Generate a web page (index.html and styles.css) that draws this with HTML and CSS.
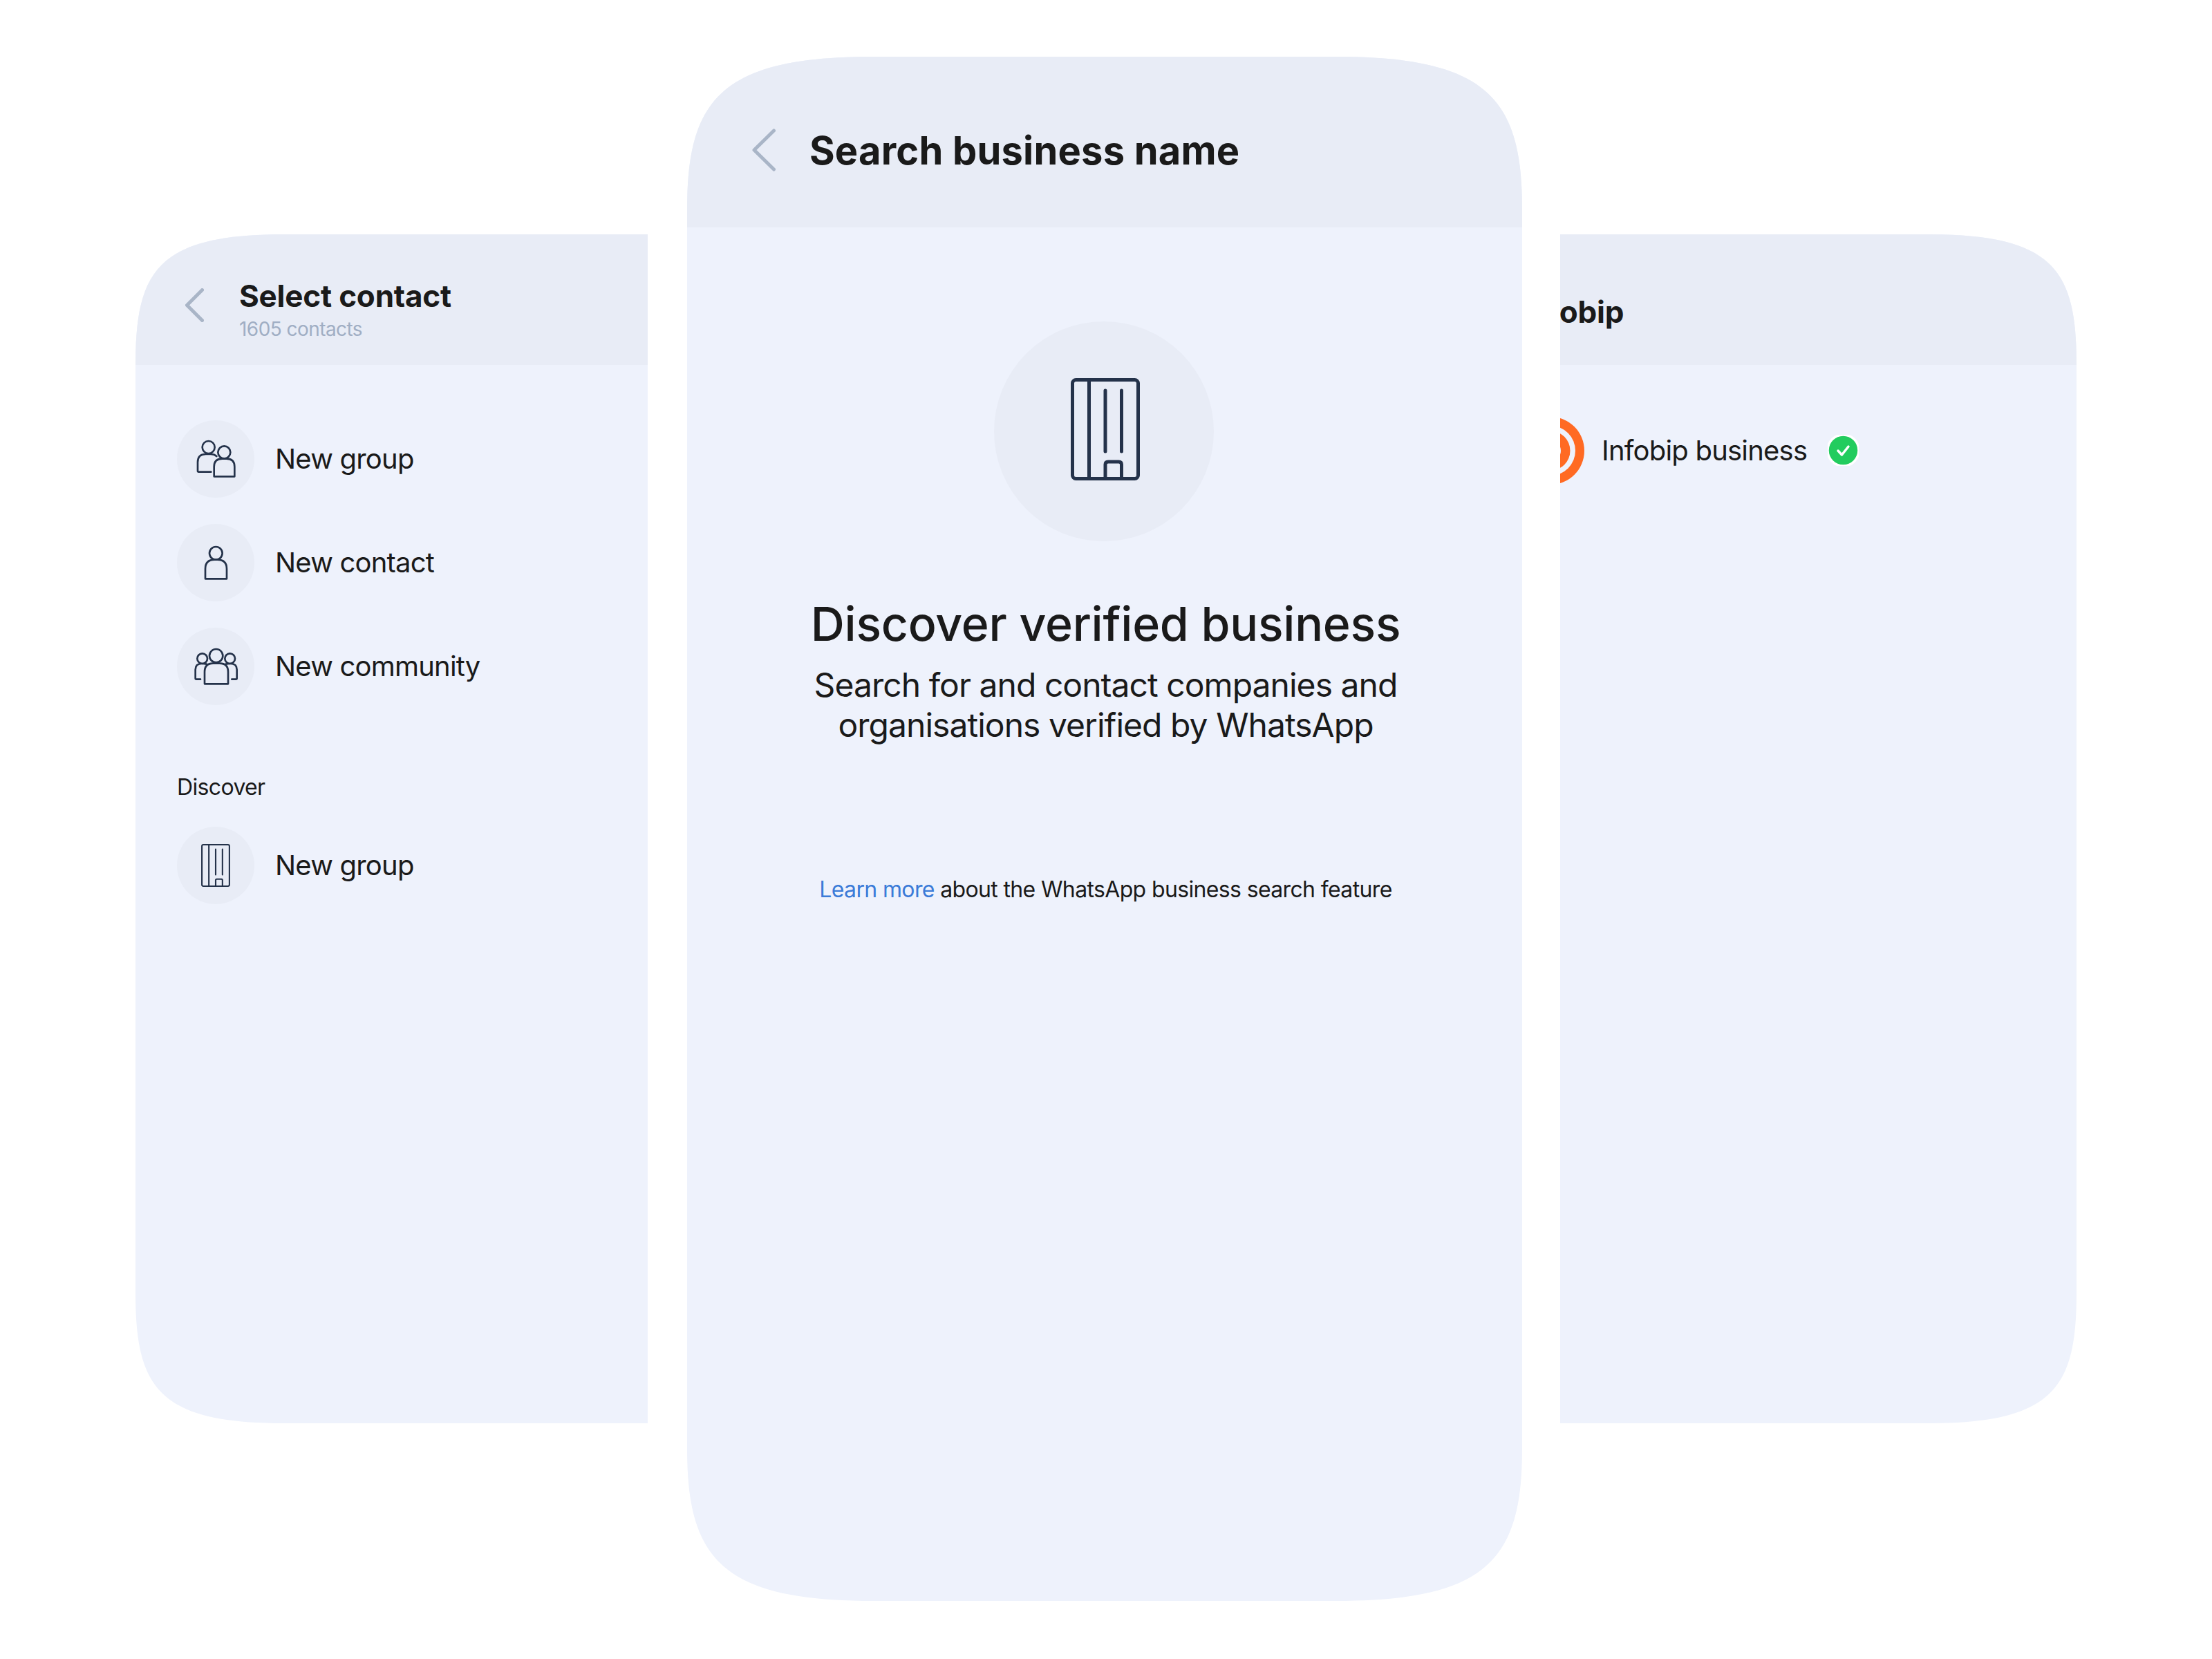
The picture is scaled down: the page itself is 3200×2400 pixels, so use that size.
FILE: index.html
```html
<!DOCTYPE html>
<html lang="en">
<head>
<meta charset="utf-8">
<title>WhatsApp business search</title>
<link rel="stylesheet" href="styles.css">
</head>
<body>
<main class="stage">
  <section class="phone phone-left">
    <header class="head head-side">
      <svg class="chev chev-small" viewBox="0 0 27 49"><path d="M24.500 2.500 2.500 24.500l22 22"/></svg>
      <div class="head-text">
        <h2 class="title-small">Select contact</h2>
        <p class="subtitle">1605 contacts</p>
      </div>
    </header>
    <div class="list">
      <div class="row">
        <span class="disc"><svg class="glyph" viewBox="18 23 336 336"><circle cx="155" cy="140" r="27"/><path d="M166 247H112q-4 0-4-4v-38q0-35 35-35h22q16 0 25 9"/><circle cx="223" cy="162" r="27"/><path d="M179 267v-42q0-35 35-35h19q35 0 35 35v42z"/></svg></span>
        <span class="row-label">New group</span>
      </div>
      <div class="row">
        <span class="disc"><svg class="glyph" viewBox="18 23 336 336"><circle cx="187" cy="150" r="28"/><path d="M141 261v-43q0-40 40-40h12q41 0 41 40v43z"/></svg></span>
        <span class="row-label">New contact</span>
      </div>
      <div class="row">
        <span class="disc"><svg class="glyph" viewBox="18 23 336 336"><circle cx="188" cy="145" r="29"/><path d="M138 267v-52q0-37 37-37h28q37 0 37 37v52z"/><circle cx="128" cy="157" r="22"/><path d="M120 247h-18q-4 0-4-4v-38q0-26 28-26 10 0 20 2"/><circle cx="248" cy="157" r="22"/><path d="M256 247h18q4 0 4-4v-38q0-26-28-26-10 0-20 2"/></svg></span>
        <span class="row-label">New community</span>
      </div>
      <p class="section-label">Discover</p>
      <div class="row">
        <span class="disc"><svg class="building building-small" viewBox="0 0 100 148"><rect x="2.500" y="2.500" width="95" height="143" rx="5"/><path d="M26.500 2.500v143M50 18v88M73.500 18v88M50 145v-20q0-4 4-4h15.500q4 0 4 4v20"/></svg></span>
        <span class="row-label">New group</span>
      </div>
    </div>
  </section>

  <section class="phone phone-center">
    <header class="head head-center">
      <svg class="chev chev-large" viewBox="0 0 34 62"><path d="M31.500 3 3 31l28.500 28"/></svg>
      <h1 class="title-large">Search business name</h1>
    </header>
    <div class="discover">
      <span class="disc disc-large"><svg class="building" viewBox="0 0 100 148"><rect x="2.500" y="2.500" width="95" height="143" rx="5"/><path d="M26.500 2.500v143M50 18v88M73.500 18v88M50 145v-20q0-4 4-4h15.500q4 0 4 4v20"/></svg></span>
      <h2 class="headline">Discover verified business</h2>
      <p class="lead">Search for and contact companies and<br>organisations verified by WhatsApp</p>
      <p class="note"><a class="link" href="#">Learn more</a> about the WhatsApp business search feature</p>
    </div>
  </section>

  <section class="phone phone-right">
    <header class="head head-right">
      <h2 class="title-small title-cut">Infobip</h2>
    </header>
    <div class="biz">
      <svg class="logo" viewBox="0 0 98 98"><circle cx="49" cy="49" r="49" fill="#ff6a23"/><circle cx="49" cy="49" r="36" fill="#eef2fc"/><circle cx="49" cy="49" r="28.500" fill="#ff6a23"/><circle cx="49" cy="49" r="15" fill="#eef2fc"/></svg>
      <span class="row-label">Infobip business</span>
      <svg class="check" viewBox="0 0 45 45"><circle cx="22.500" cy="22.500" r="22.500" fill="#22cc5e"/><path d="m15 23 5.500 6L30 17"/></svg>
    </div>
  </section>
</main>
</body>
</html>
```
FILE: styles.css
```css
* { box-sizing: border-box; }
html, body { margin: 0; padding: 0; background: #fff; }
body { font-family: Inter, "Noto Sans", sans-serif; color: #1a1a1a; }
h1, h2, p { margin: 0; font-weight: 400; }

.stage {
  display: flex;
  align-items: center;
  width: 3200px;
  height: 2398px;
  padding-left: 196px;
}

.phone { background: #eef2fc; overflow: hidden; flex: none; }
.phone-left {
  width: 741px;
  height: 1720px;
  clip-path: path("M0 190C0 54 30 0 215 0H741V1720H215C30 1720 0 1666 0 1530Z");
}
.phone-center {
  width: 1208px;
  height: 2234px;
  margin-left: 57px;
  clip-path: path("M0 220C0 60 51 0 270 0H938C1157 0 1208 60 1208 220V2014C1208 2174 1157 2234 938 2234H270C51 2234 0 2174 0 2014Z");
}
.phone-right {
  width: 747px;
  height: 1720px;
  margin-left: 55px;
  clip-path: path("M0 0H532C717 0 747 54 747 190V1530C747 1666 717 1720 532 1720H0Z");
}

.head { background: #e8ecf6; display: flex; }
.head-side { height: 189px; padding: 62px 0 0 72px; gap: 51px; }
.head-center { height: 247px; padding: 101px 0 0 94px; gap: 49px; }
.head-right { height: 189px; padding-top: 85px; }

.chev { fill: none; stroke: #a9b5c7; stroke-width: 5; stroke-linecap: round; stroke-linejoin: round; flex: none; }
.chev-small { width: 27px; height: 49px; margin-top: 16px; }
.chev-large { width: 34px; height: 62px; margin-top: 3px; }

.title-small { font-size: 44px; line-height: 54px; font-weight: 700; letter-spacing: -0.2px; white-space: nowrap; }
.title-large { font-size: 56px; line-height: 70px; font-weight: 700; letter-spacing: 0.2px; white-space: nowrap; }
.title-cut { margin-left: -57px; }
.subtitle { font-size: 28px; line-height: 40px; letter-spacing: -0.02em; color: #a0aec4; margin-top: 1px; }

.list { padding: 80px 0 0 60px; display: flex; flex-direction: column; gap: 38px; }
.row { display: flex; align-items: center; gap: 30px; }
.row-label { font-size: 40px; line-height: 56px; letter-spacing: -0.02em; white-space: nowrap; }
.section-label { font-size: 32px; line-height: 40px; letter-spacing: -0.02em; margin-top: 61px; margin-bottom: -1px; }

.disc {
  width: 112px;
  height: 112px;
  border-radius: 50%;
  background: #e8ecf6;
  display: flex;
  align-items: center;
  justify-content: center;
  flex: none;
}
.glyph { width: 112px; height: 112px; fill: none; stroke: #24324a; stroke-width: 8; stroke-linecap: round; stroke-linejoin: round; }
.building { width: 100px; height: 148px; fill: none; stroke: #24324a; stroke-width: 5; stroke-linecap: round; stroke-linejoin: round; }
.building-small { width: 42px; height: 62px; }

.discover { display: flex; flex-direction: column; align-items: center; padding: 136px 0 0 3px; }
.disc-large { width: 318px; height: 318px; margin-left: -5px; padding: 0 0 6px 3px; }
.headline { font-size: 68px; line-height: 84px; font-weight: 450; letter-spacing: -0.25px; margin-top: 77px; white-space: nowrap; }
.lead { font-size: 48px; line-height: 58px; letter-spacing: -0.02em; margin-top: 18px; text-align: center; white-space: nowrap; }
.note { font-size: 32px; line-height: 44px; letter-spacing: -0.02em; margin-top: 187px; white-space: nowrap; }
.link { color: #3b7bd8; text-decoration: none; }

.biz { display: flex; align-items: center; padding-top: 75px; margin-left: -63px; }
.logo { width: 98px; height: 98px; flex: none; margin-right: 25px; }
.check { width: 45px; height: 45px; flex: none; margin-left: 30px; margin-top: -2px; fill: none; stroke: #fff; stroke-width: 3.500; stroke-linecap: round; stroke-linejoin: round; }
```
